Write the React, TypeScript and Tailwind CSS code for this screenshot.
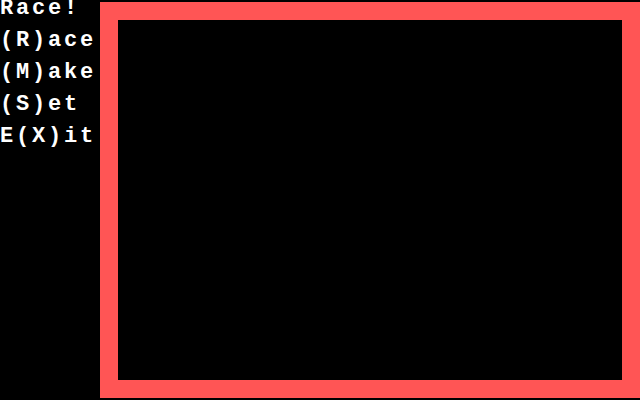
import React from "react";

export default function App() {
  const items = ["Race!", "(R)ace", "(M)ake", "(S)et", "E(X)it"];
  return (
    <div className="w-[640px] h-[400px] bg-black flex overflow-hidden">
      <div
        className="w-[100px] shrink-0 flex flex-col gap-[14px] text-white font-bold text-[22px] leading-[18px] tracking-[2.8px] whitespace-pre"
        style={{ fontFamily: '"Liberation Mono", "DejaVu Sans Mono", monospace' }}
      >
        {items.map((t) => (
          <div key={t}>{t}</div>
        ))}
      </div>
      <div className="mt-[2px] w-[540px] h-[396px] border-[18px] border-[#ff5555] bg-black" />
    </div>
  );
}
